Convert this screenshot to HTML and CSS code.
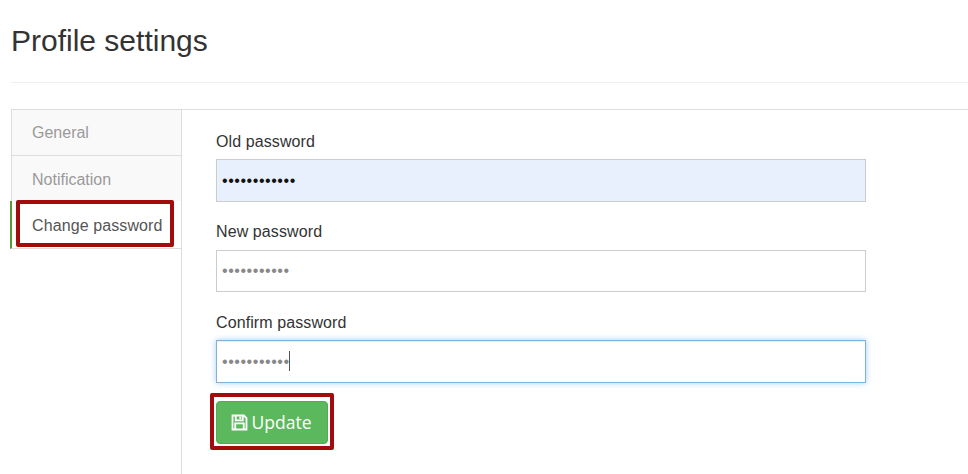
FILE: index.html
```html
<!DOCTYPE html>
<html>
  <head>
    <meta charset="UTF-8">
    <meta name="viewport" content="width=device-width,initial-scale=1">
    <link rel="stylesheet" href="styles.css">
    <title>Profile settings</title>
  </head>
  <body>
    <div id="page">
      <h1 class="page-title">Profile settings</h1>
      <hr class="title-rule">
      <div id="settings">
        <div id="tabs">
          <a class="tab" href="#">General</a>
          <a class="tab" href="#">Notification</a>
          <a class="tab active" href="#">Change password<span class="callout callout-tab"></span></a>
        </div>
        <form id="content">
          <label for="old">Old password</label>
          <input class="field autofilled" type="password" id="old" value="abcdefghijkl">
          <label class="label-new" for="new">New password</label>
          <input class="field short" type="password" id="new" value="abcdefghijk">
          <label for="confirm">Confirm password</label>
          <div class="field-wrap">
            <input class="field focused" type="password" id="confirm" value="abcdefghijk">
            <span class="caret"></span>
          </div>
          <button class="update" type="button">
            <svg class="save-icon" viewBox="0 0 18 18" width="17" height="17" fill="none" stroke="currentColor" stroke-width="1.9">
              <path d="M1.6 1.6h12l2.800 2.800v12h-14.800z"/>
              <path d="M5 1.800v5h7.500v-5"/>
              <path d="M9.800 2.800v2.800"/>
              <path d="M4.500 16v-6h9v6"/>
            </svg>Update<span class="callout callout-btn"></span>
          </button>
        </form>
      </div>
    </div>
  </body>
</html>
```

FILE: styles.css
```css
html, body {
  margin: 0;
  padding: 0;
  background-color: #fff;
  overflow: hidden;
}

body {
  color: #333;
  font-family: "Liberation Sans", Arial, sans-serif;
  font-size: 16px;
}

#page {
  height: 474px;
  padding-left: 11px;
  box-sizing: border-box;
}

.page-title {
  margin: 0;
  padding-top: 23px;
  height: 82px;
  box-sizing: border-box;
  font-size: 30px;
  line-height: 36px;
  font-weight: 400;
  color: #333;
}

.title-rule {
  margin: 0 0 26px;
  border: 0;
  border-top: 1px solid #eee;
}

#settings {
  display: flex;
  height: 365px;
  border-top: 1px solid #ddd;
}

#tabs {
  width: 170px;
  flex-shrink: 0;
}

.tab {
  display: block;
  position: relative;
  height: 46px;
  box-sizing: border-box;
  padding: 13px 0 0 20px;
  line-height: 19px;
  white-space: nowrap;
  color: #999;
  text-decoration: none;
  background-color: #f9f9f9;
  border-left: 1px solid #ddd;
  border-bottom: 1px solid #ddd;
}

.tab + .tab {
  padding-top: 14px;
}

.tab.active {
  width: 171px;
  height: 48px;
  margin: -1px 0 0 -1px;
  padding-top: 15px;
  padding-left: 20px;
  letter-spacing: .1px;
  color: #555;
  background-color: #fff;
  border-left: 2px solid #5b9a2f;
}

#content {
  flex: 1;
  padding: 22px 0 0 34px;
  border-left: 1px solid #ddd;
}

label {
  display: block;
  height: 19px;
  margin-bottom: 8px;
  line-height: 19px;
  letter-spacing: .1px;
  color: #333;
}

.label-new {
  margin-bottom: 9px;
}

.field {
  display: block;
  width: 650px;
  height: 43px;
  box-sizing: border-box;
  margin-bottom: 21px;
  padding: 0 5px;
  font-family: "Liberation Sans", Arial, sans-serif;
  font-size: 16px;
  letter-spacing: .55px;
  color: #888;
  background-color: #fff;
  border: 1px solid #ccc;
  outline: none;
}

.short {
  height: 42px;
}

.autofilled {
  margin-bottom: 20px;
  color: #111;
  background-color: #e8f0fe;
}

.field-wrap {
  position: relative;
  width: 650px;
}

.focused {
  margin-bottom: 0;
  border-color: #7db4de;
  box-shadow: inset 0 1px 1px rgba(0, 0, 0, .075), 0 0 6px rgba(102, 175, 233, .6);
}

.caret {
  position: absolute;
  left: 73px;
  top: 11px;
  width: 1px;
  height: 20px;
  background-color: #555;
}

.update {
  position: relative;
  display: flex;
  align-items: center;
  justify-content: center;
  gap: 4px;
  width: 112px;
  height: 43px;
  margin-top: 18px;
  padding: 0 0 1px 2px;
  font-family: "Open Sans", sans-serif;
  font-size: 17.5px;
  color: #fff;
  background-color: #5cb85c;
  border: 1px solid #4cae4c;
  border-radius: 4px;
}

.save-icon {
  flex-shrink: 0;
}

.callout {
  position: absolute;
  box-sizing: border-box;
  border: 4px solid #a30c0c;
  border-radius: 2px;
  pointer-events: none;
}

.callout-tab {
  left: 4px;
  top: -1px;
  width: 158px;
  height: 47px;
}

.callout-btn {
  left: -7px;
  top: -9px;
  width: 124px;
  height: 57px;
}
```
